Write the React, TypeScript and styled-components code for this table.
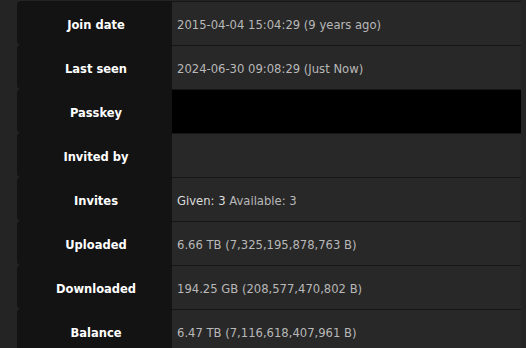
import React from "react";
import styled, { createGlobalStyle } from "styled-components";

const Global = createGlobalStyle`
  html, body { margin: 0; padding: 0; background: #242424; }
  body { font-family: "DejaVu Sans", Verdana, sans-serif; }
`;

const Page = styled.div`
  padding: 1px 0 0 17px;
  height: 347px;
  overflow: hidden;
`;

const Table = styled.div`
  display: grid;
  width: 504px;
`;

const Row = styled.div`
  display: grid;
  grid-template-columns: 155px 349px;
  height: 44px;
`;

const Label = styled.div`
  display: flex;
  align-items: center;
  justify-content: center;
  background: #131313;
  border-radius: 4px 0 0 4px;
  color: #ffffff;
  font-weight: bold;
  font-size: 11.5px;
  padding: 3px 0 0 3px;
`;

const Value = styled.div<{ $black?: boolean }>`
  display: flex;
  align-items: center;
  box-sizing: border-box;
  padding: 2px 0 0 5px;
  background: ${(p) => (p.$black ? "#000000" : "#282828")};
  border-top: 1px solid #161616;
  color: #b8b8b8;
  font-size: 11.6px;
  white-space: pre;
`;

const Bright = styled.span`
  color: #dcdcdc;
`;

const rows: { label: string; value: React.ReactNode; black?: boolean }[] = [
  { label: "Join date", value: "2015-04-04 15:04:29 (9 years ago)" },
  { label: "Last seen", value: "2024-06-30 09:08:29 (Just Now)" },
  { label: "Passkey", value: "", black: true },
  { label: "Invited by", value: "" },
  {
    label: "Invites",
    value: (
      <>
        <Bright>Given: 3</Bright> Available: 3
      </>
    ),
  },
  { label: "Uploaded", value: "6.66 TB (7,325,195,878,763 B)" },
  { label: "Downloaded", value: "194.25 GB (208,577,470,802 B)" },
  { label: "Balance", value: "6.47 TB (7,116,618,407,961 B)" },
];

export default function App() {
  return (
    <>
      <Global />
      <Page>
        <Table>
          {rows.map((r) => (
            <Row key={r.label}>
              <Label>{r.label}</Label>
              <Value $black={r.black}>{r.value}</Value>
            </Row>
          ))}
        </Table>
      </Page>
    </>
  );
}
